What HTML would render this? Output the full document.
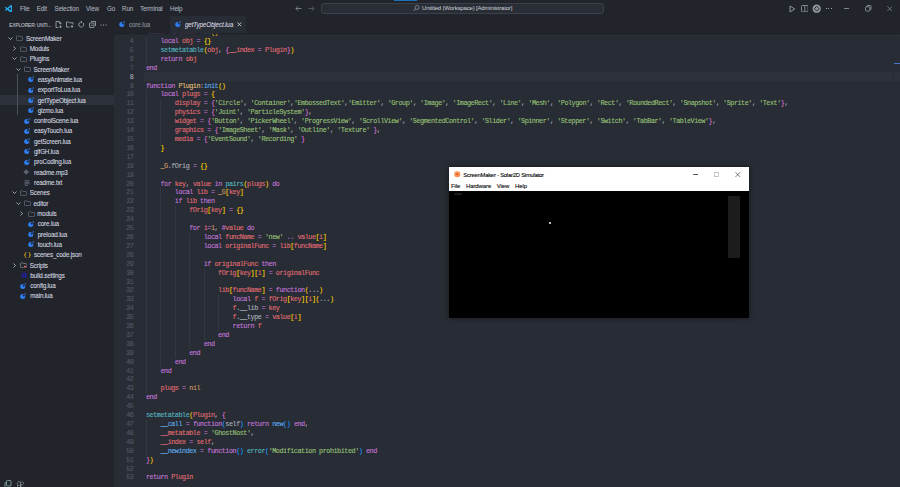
<!DOCTYPE html>
<html><head><meta charset="utf-8"><style>
*{margin:0;padding:0;box-sizing:border-box}
html,body{width:900px;height:487px;overflow:hidden;background:#282c34;font-family:"Liberation Sans",sans-serif}
.abs{position:absolute}
#title{position:absolute;left:0;top:0;width:900px;height:16.4px;background:#21252b}
.menu{position:absolute;top:4.6px;font-size:6.3px;letter-spacing:-0.15px;color:#d7dae0;line-height:7px;white-space:nowrap;-webkit-text-stroke:0.08px currentColor}
#side{position:absolute;left:0;top:16.4px;width:113.6px;height:471px;background:#21252b}
.tr{position:absolute;font-size:6.3px;letter-spacing:-0.17px;line-height:10.3125px;color:#d7dae0;white-space:nowrap;-webkit-text-stroke:0.08px currentColor}
.ico{position:absolute;line-height:0}
.sel{position:absolute;left:0;width:113.6px;height:10.3125px;background:#2c313a}
#tabs{position:absolute;left:113.6px;top:16.4px;width:786.4px;height:16.4px;background:#21252b}
#editor{position:absolute;left:113.6px;top:32.8px;width:786.4px;height:454.2px;background:#282c34;overflow:hidden}
.ln{position:absolute;left:146.0px;height:8.90625px;line-height:8.90625px;font-family:"Liberation Mono",monospace;font-size:6.8px;letter-spacing:-0.4736px;-webkit-text-stroke:0.1px currentColor;white-space:pre;color:#abb2bf}
.num{position:absolute;left:0;width:133.4px;text-align:right;height:8.90625px;line-height:8.90625px;font-family:"Liberation Mono",monospace;font-size:6.8px;letter-spacing:-0.4736px;color:#515867;-webkit-text-stroke:0.1px currentColor}
.num.cur{color:#abb2bf}
.ig{position:absolute;width:0.47px;height:8.90625px;background:#323740}
#code{position:absolute;left:-113.6px;top:-32.8px;width:900px;height:487px}
</style></head><body>
<svg width="0" height="0" style="position:absolute"><defs><mask id="lm" maskUnits="userSpaceOnUse" x="0" y="0" width="12" height="12"><rect x="0" y="0" width="12" height="12" fill="#fff"/><circle cx="7.3" cy="4.7" r="1.9" fill="#000"/></mask></defs></svg>
<div id="title">
  <svg class="abs" style="left:4.5px;top:4.7px" width="7.9" height="7.6" viewBox="0 0 100 100" preserveAspectRatio="none"><path fill-rule="evenodd" fill="#23a9f2" d="M96.46 10.8L75.86.87a6.23 6.23 0 0 0-7.1 1.2L29.35 38.04 12.18 25.01a4.16 4.16 0 0 0-5.32.24L1.36 30.25a4.16 4.16 0 0 0 0 6.16L16.25 50 1.36 63.59a4.16 4.16 0 0 0 0 6.16l5.5 5a4.160 4.16 0 0 0 5.32.24l17.17-13.03 39.41 35.97a6.23 6.23 0 0 0 7.1 1.2l20.6-9.930A6.25 6.25 0 0 0 100 83.6V16.4a6.25 6.25 0 0 0-3.54-5.6zM75.02 72.7L45.11 50l29.91-22.7z"/></svg>
  <div class="menu" style="left:20px;top:4.8px;color:#b4bac4;-webkit-text-stroke:0.03px currentColor">File</div>
  <div class="menu" style="left:36.7px;top:4.8px;color:#b4bac4;-webkit-text-stroke:0.03px currentColor">Edit</div>
  <div class="menu" style="left:54.4px;top:4.8px;color:#b4bac4;-webkit-text-stroke:0.03px currentColor">Selection</div>
  <div class="menu" style="left:86px;top:4.8px;color:#b4bac4;-webkit-text-stroke:0.03px currentColor">View</div>
  <div class="menu" style="left:107px;top:4.8px;color:#b4bac4;-webkit-text-stroke:0.03px currentColor">Go</div>
  <div class="menu" style="left:122px;top:4.8px;color:#b4bac4;-webkit-text-stroke:0.03px currentColor">Run</div>
  <div class="menu" style="left:140px;top:4.8px;color:#b4bac4;-webkit-text-stroke:0.03px currentColor">Terminal</div>
  <div class="menu" style="left:170px;top:4.8px;color:#b4bac4;-webkit-text-stroke:0.03px currentColor">Help</div>
  <div class="abs" style="left:393.9px;top:0;width:22.8px;height:1.1px;background:#1f6fb5"></div>
  <svg class="abs" style="left:295.4px;top:4.9px" width="7" height="7" viewBox="0 0 14 14"><path d="M13 7H1.8M6.6 2.2L1.8 7l4.8 4.8" fill="none" stroke="#a3aab6" stroke-width="1.25"/></svg>
  <svg class="abs" style="left:307.8px;top:4.9px" width="7" height="7" viewBox="0 0 14 14"><path d="M1 7h11.2M7.4 2.2L12.2 7l-4.8 4.8" fill="none" stroke="#6b717d" stroke-width="1.25"/></svg>
  <div class="abs" style="left:321px;top:3.0px;width:282.8px;height:11.1px;border:0.7px solid #3b404b;border-radius:2.8px;background:#292d35"></div>
  <svg class="abs" style="left:413.4px;top:5px" width="6.5" height="6.5" viewBox="0 0 13 13"><circle cx="8" cy="5" r="4" fill="none" stroke="#abb2bf" stroke-width="1.2"/><path d="M5.2 7.8L1 12" stroke="#abb2bf" stroke-width="1.3"/></svg>
  <div class="menu" style="left:422px;top:5.4px;color:#c8ccd4;font-size:6px;letter-spacing:-0.17px;-webkit-text-stroke:0.03px currentColor">Untitled (Workspace) [Administrator]</div>
  <svg class="abs" style="left:788.5px;top:4.6px" width="7" height="8" viewBox="0 0 14 16"><path d="M2 2.2v11.6L11.6 8z" fill="none" stroke="#9da5b4" stroke-width="1.7" stroke-linejoin="round"/></svg>
  <svg class="abs" style="left:800.8px;top:4.6px" width="7.6" height="7.4" viewBox="0 0 15 14.6"><rect x="0.9" y="0.9" width="13.2" height="12.8" rx="2" fill="none" stroke="#9da5b4" stroke-width="1.6"/><path d="M7.5 1v12.6" stroke="#9da5b4" stroke-width="1.5"/></svg>
  <svg class="abs" style="left:811.8px;top:3.7px" width="9.4" height="9.4" viewBox="0 0 18 18"><circle cx="9" cy="9" r="8" fill="#8f96a2"/><path d="M9 4.4L13.6 9 9 13.6 4.4 9z" fill="none" stroke="#21252b" stroke-width="1.9"/></svg>
  <div class="abs" style="left:826px;top:8px;width:1px;height:1px;background:#a0a7b3"></div><div class="abs" style="left:828.3px;top:8px;width:1px;height:1px;background:#a0a7b3"></div><div class="abs" style="left:830.6px;top:8px;width:1px;height:1px;background:#a0a7b3"></div>
  <div class="abs" style="left:843.8px;top:7.7px;width:5.4px;height:0.6px;background:#7f8692"></div>
  <svg class="abs" style="left:865px;top:5.2px" width="6.6" height="6.6" viewBox="0 0 13 13"><rect x="1" y="3.5" width="8.5" height="8.5" rx="2" fill="none" stroke="#9da5b4" stroke-width="1.5"/><path d="M3.5 3.3V3a2 2 0 0 1 2-2h4.5a2 2 0 0 1 2 2v4.5a2 2 0 0 1-2 2h-.3" fill="none" stroke="#9da5b4" stroke-width="1.5"/></svg>
  <svg class="abs" style="left:887px;top:5.5px" width="5.4" height="5.4" viewBox="0 0 10 10"><path d="M0.5 0.5l9 9M9.5 0.5l-9 9" stroke="#9da5b4" stroke-width="1.1"/></svg>
</div>
<div id="side">
  <div class="abs" style="left:9.3px;top:6.1px;font-size:4.85px;letter-spacing:-0.15px;color:#c8ccd4;line-height:7px;white-space:nowrap;-webkit-text-stroke:0.06px currentColor">EXPLORER: UNTI...</div>
  <svg class="abs" style="left:55.3px;top:5.1px" width="7" height="7" viewBox="0 0 14 14"><path d="M8.5 1H2v12h5M8.5 1L12 4.5V7M8.5 1v3.5H12" fill="none" stroke="#c0c5ce" stroke-width="1.35"/><path d="M11 9v5M8.5 11.5h5" stroke="#c0c5ce" stroke-width="1.35"/></svg>
  <svg class="abs" style="left:66px;top:5.1px" width="8" height="7" viewBox="0 0 16 14"><path d="M7 12H1V2h4.5l1.5 1.5h7V7" fill="none" stroke="#c0c5ce" stroke-width="1.35"/><path d="M12 8.5v5M9.5 11h5" stroke="#c0c5ce" stroke-width="1.35"/></svg>
  <svg class="abs" style="left:78px;top:5.1px" width="6.5" height="7" viewBox="0 0 13 14"><path d="M10.5 4.2A5 5 0 1 1 6.5 2.2" fill="none" stroke="#c0c5ce" stroke-width="1.4"/><path d="M6 0.3l2.2 2-2.2 2" fill="none" stroke="#c0c5ce" stroke-width="1.35"/></svg>
  <svg class="abs" style="left:89px;top:5.1px" width="7" height="7" viewBox="0 0 14 14"><rect x="1" y="4" width="9" height="9" rx="1" fill="none" stroke="#c0c5ce" stroke-width="1.35"/><path d="M4 1h9v9" fill="none" stroke="#c0c5ce" stroke-width="1.35"/><path d="M3.5 8.5h4" stroke="#c0c5ce" stroke-width="1.35"/></svg>
  <svg class="abs" style="left:100px;top:8px" width="7" height="2" viewBox="0 0 14 4"><circle cx="2" cy="2" r="1.1" fill="#c0c5ce"/><circle cx="7" cy="2" r="1.1" fill="#c0c5ce"/><circle cx="12" cy="2" r="1.1" fill="#c0c5ce"/></svg>
</div>
<div id="tree" class="abs" style="left:0;top:0">
<div class="ico" style="left:8.00px;top:35.74px"><svg width="5" height="5" viewBox="0 0 10 10"><path d="M1 3l4 4 4-4" fill="none" stroke="#c5cad3" stroke-width="1.5"/></svg></div>
<div class="ico" style="left:16.30px;top:35.34px"><svg width="7" height="6" viewBox="0 0 14 12"><path d="M2.5 1.5h2.8l1.4 1.5h4.8a1.6 1.6 0 0 1 1.6 1.6v5a1.6 1.6 0 0 1-1.6 1.6H2.5A1.6 1.6 0 0 1 0.9 9.6V3.1A1.6 1.6 0 0 1 2.5 1.5z" fill="none" stroke="#6a7282" stroke-width="1.5"/></svg></div>
<div class="tr" style="left:26.00px;top:33.64px">ScreenMaker</div>
<div class="ico" style="left:11.75px;top:46.06px"><svg width="5" height="5" viewBox="0 0 10 10"><path d="M3 1l4 4-4 4" fill="none" stroke="#c5cad3" stroke-width="1.5"/></svg></div>
<div class="ico" style="left:20.05px;top:45.66px"><svg width="7" height="6" viewBox="0 0 14 12"><path d="M2.5 1.5h2.8l1.4 1.5h4.8a1.6 1.6 0 0 1 1.6 1.6v5a1.6 1.6 0 0 1-1.6 1.6H2.5A1.6 1.6 0 0 1 0.9 9.6V3.1A1.6 1.6 0 0 1 2.5 1.5z" fill="none" stroke="#6a7282" stroke-width="1.5"/></svg></div>
<div class="tr" style="left:29.75px;top:43.96px">Moduls</div>
<div class="ico" style="left:11.75px;top:56.37px"><svg width="5" height="5" viewBox="0 0 10 10"><path d="M1 3l4 4 4-4" fill="none" stroke="#c5cad3" stroke-width="1.5"/></svg></div>
<div class="ico" style="left:20.05px;top:55.97px"><svg width="7" height="6" viewBox="0 0 14 12"><path d="M2.5 1.5h2.8l1.4 1.5h4.8a1.6 1.6 0 0 1 1.6 1.6v5a1.6 1.6 0 0 1-1.6 1.6H2.5A1.6 1.6 0 0 1 0.9 9.6V3.1A1.6 1.6 0 0 1 2.5 1.5z" fill="none" stroke="#6a7282" stroke-width="1.5"/></svg></div>
<div class="tr" style="left:29.75px;top:54.27px">Plugins</div>
<div class="ico" style="left:15.50px;top:66.68px"><svg width="5" height="5" viewBox="0 0 10 10"><path d="M1 3l4 4 4-4" fill="none" stroke="#c5cad3" stroke-width="1.5"/></svg></div>
<div class="ico" style="left:23.80px;top:66.28px"><svg width="7" height="6" viewBox="0 0 14 12"><path d="M2.5 1.5h2.8l1.4 1.5h4.8a1.6 1.6 0 0 1 1.6 1.6v5a1.6 1.6 0 0 1-1.6 1.6H2.5A1.6 1.6 0 0 1 0.9 9.6V3.1A1.6 1.6 0 0 1 2.5 1.5z" fill="none" stroke="#6a7282" stroke-width="1.5"/></svg></div>
<div class="tr" style="left:33.50px;top:64.58px">ScreenMaker</div>
<div class="ico" style="left:28.25px;top:76.59px"><svg width="6.2" height="6.2" viewBox="0 0 12 12" style="margin-left:-0.5px;margin-top:-0.3px"><circle cx="5.3" cy="6.7" r="4.9" fill="#2f7ef4" mask="url(#lm)"/><circle cx="10.3" cy="1.7" r="1.35" fill="#2f7ef4"/></svg></div>
<div class="tr" style="left:37.75px;top:74.89px">easyAnimate.lua</div>
<div class="ico" style="left:28.25px;top:86.91px"><svg width="6.2" height="6.2" viewBox="0 0 12 12" style="margin-left:-0.5px;margin-top:-0.3px"><circle cx="5.3" cy="6.7" r="4.9" fill="#2f7ef4" mask="url(#lm)"/><circle cx="10.3" cy="1.7" r="1.35" fill="#2f7ef4"/></svg></div>
<div class="tr" style="left:37.75px;top:85.21px">exportToLua.lua</div>
<div class="sel" style="top:95.02px"></div>
<div class="ico" style="left:28.25px;top:97.22px"><svg width="6.2" height="6.2" viewBox="0 0 12 12" style="margin-left:-0.5px;margin-top:-0.3px"><circle cx="5.3" cy="6.7" r="4.9" fill="#2f7ef4" mask="url(#lm)"/><circle cx="10.3" cy="1.7" r="1.35" fill="#2f7ef4"/></svg></div>
<div class="tr" style="left:37.75px;top:95.52px">getTypeObject.lua</div>
<div class="ico" style="left:28.25px;top:107.53px"><svg width="6.2" height="6.2" viewBox="0 0 12 12" style="margin-left:-0.5px;margin-top:-0.3px"><circle cx="5.3" cy="6.7" r="4.9" fill="#2f7ef4" mask="url(#lm)"/><circle cx="10.3" cy="1.7" r="1.35" fill="#2f7ef4"/></svg></div>
<div class="tr" style="left:37.75px;top:105.83px">gizmo.lua</div>
<div class="ico" style="left:24.50px;top:117.84px"><svg width="6.2" height="6.2" viewBox="0 0 12 12" style="margin-left:-0.5px;margin-top:-0.3px"><circle cx="5.3" cy="6.7" r="4.9" fill="#2f7ef4" mask="url(#lm)"/><circle cx="10.3" cy="1.7" r="1.35" fill="#2f7ef4"/></svg></div>
<div class="tr" style="left:34.00px;top:116.14px">controlScene.lua</div>
<div class="ico" style="left:24.50px;top:128.16px"><svg width="6.2" height="6.2" viewBox="0 0 12 12" style="margin-left:-0.5px;margin-top:-0.3px"><circle cx="5.3" cy="6.7" r="4.9" fill="#2f7ef4" mask="url(#lm)"/><circle cx="10.3" cy="1.7" r="1.35" fill="#2f7ef4"/></svg></div>
<div class="tr" style="left:34.00px;top:126.46px">easyTouch.lua</div>
<div class="ico" style="left:24.50px;top:138.47px"><svg width="6.2" height="6.2" viewBox="0 0 12 12" style="margin-left:-0.5px;margin-top:-0.3px"><circle cx="5.3" cy="6.7" r="4.9" fill="#2f7ef4" mask="url(#lm)"/><circle cx="10.3" cy="1.7" r="1.35" fill="#2f7ef4"/></svg></div>
<div class="tr" style="left:34.00px;top:136.77px">getScreen.lua</div>
<div class="ico" style="left:24.50px;top:148.78px"><svg width="6.2" height="6.2" viewBox="0 0 12 12" style="margin-left:-0.5px;margin-top:-0.3px"><circle cx="5.3" cy="6.7" r="4.9" fill="#2f7ef4" mask="url(#lm)"/><circle cx="10.3" cy="1.7" r="1.35" fill="#2f7ef4"/></svg></div>
<div class="tr" style="left:34.00px;top:147.08px">gifGH.lua</div>
<div class="ico" style="left:24.50px;top:159.09px"><svg width="6.2" height="6.2" viewBox="0 0 12 12" style="margin-left:-0.5px;margin-top:-0.3px"><circle cx="5.3" cy="6.7" r="4.9" fill="#2f7ef4" mask="url(#lm)"/><circle cx="10.3" cy="1.7" r="1.35" fill="#2f7ef4"/></svg></div>
<div class="tr" style="left:34.00px;top:157.39px">proCoding.lua</div>
<div class="ico" style="left:24.50px;top:169.41px"><svg width="6.4" height="6" viewBox="0 0 12 12" style="margin-left:-1.2px;margin-top:-0.5px"><path d="M6 0.5l5.5 5.5-5.5 5.5-5.5-5.5z" fill="#5c6370"/></svg></div>
<div class="tr" style="left:34.00px;top:167.71px">readme.mp3</div>
<div class="ico" style="left:24.50px;top:179.72px"><svg width="6" height="6" viewBox="0 0 12 12" style="margin-left:-0.5px"><path d="M1 1.5h10M1 4.5h10M1 7.5h10M1 10.5h7" stroke="#5c6370" stroke-width="2"/></svg></div>
<div class="tr" style="left:34.00px;top:178.02px">readme.txt</div>
<div class="ico" style="left:11.75px;top:190.43px"><svg width="5" height="5" viewBox="0 0 10 10"><path d="M1 3l4 4 4-4" fill="none" stroke="#c5cad3" stroke-width="1.5"/></svg></div>
<div class="ico" style="left:20.05px;top:190.03px"><svg width="7" height="6" viewBox="0 0 14 12"><path d="M2.5 1.5h2.8l1.4 1.5h4.8a1.6 1.6 0 0 1 1.6 1.6v5a1.6 1.6 0 0 1-1.6 1.6H2.5A1.6 1.6 0 0 1 0.9 9.6V3.1A1.6 1.6 0 0 1 2.5 1.5z" fill="none" stroke="#6a7282" stroke-width="1.5"/></svg></div>
<div class="tr" style="left:29.75px;top:188.33px">Scenes</div>
<div class="ico" style="left:15.50px;top:200.74px"><svg width="5" height="5" viewBox="0 0 10 10"><path d="M1 3l4 4 4-4" fill="none" stroke="#c5cad3" stroke-width="1.5"/></svg></div>
<div class="ico" style="left:23.80px;top:200.34px"><svg width="7" height="6" viewBox="0 0 14 12"><path d="M2.5 1.5h2.8l1.4 1.5h4.8a1.6 1.6 0 0 1 1.6 1.6v5a1.6 1.6 0 0 1-1.6 1.6H2.5A1.6 1.6 0 0 1 0.9 9.6V3.1A1.6 1.6 0 0 1 2.5 1.5z" fill="none" stroke="#6a7282" stroke-width="1.5"/></svg></div>
<div class="tr" style="left:33.50px;top:198.64px">editor</div>
<div class="ico" style="left:19.25px;top:211.06px"><svg width="5" height="5" viewBox="0 0 10 10"><path d="M3 1l4 4-4 4" fill="none" stroke="#c5cad3" stroke-width="1.5"/></svg></div>
<div class="ico" style="left:27.55px;top:210.66px"><svg width="7" height="6" viewBox="0 0 14 12"><path d="M2.5 1.5h2.8l1.4 1.5h4.8a1.6 1.6 0 0 1 1.6 1.6v5a1.6 1.6 0 0 1-1.6 1.6H2.5A1.6 1.6 0 0 1 0.9 9.6V3.1A1.6 1.6 0 0 1 2.5 1.5z" fill="none" stroke="#6a7282" stroke-width="1.5"/></svg></div>
<div class="tr" style="left:37.25px;top:208.96px">moduls</div>
<div class="ico" style="left:28.25px;top:220.97px"><svg width="6.2" height="6.2" viewBox="0 0 12 12" style="margin-left:-0.5px;margin-top:-0.3px"><circle cx="5.3" cy="6.7" r="4.9" fill="#2f7ef4" mask="url(#lm)"/><circle cx="10.3" cy="1.7" r="1.35" fill="#2f7ef4"/></svg></div>
<div class="tr" style="left:37.75px;top:219.27px">core.lua</div>
<div class="ico" style="left:28.25px;top:231.28px"><svg width="6.2" height="6.2" viewBox="0 0 12 12" style="margin-left:-0.5px;margin-top:-0.3px"><circle cx="5.3" cy="6.7" r="4.9" fill="#2f7ef4" mask="url(#lm)"/><circle cx="10.3" cy="1.7" r="1.35" fill="#2f7ef4"/></svg></div>
<div class="tr" style="left:37.75px;top:229.58px">preload.lua</div>
<div class="ico" style="left:28.25px;top:241.59px"><svg width="6.2" height="6.2" viewBox="0 0 12 12" style="margin-left:-0.5px;margin-top:-0.3px"><circle cx="5.3" cy="6.7" r="4.9" fill="#2f7ef4" mask="url(#lm)"/><circle cx="10.3" cy="1.7" r="1.35" fill="#2f7ef4"/></svg></div>
<div class="tr" style="left:37.75px;top:239.89px">touch.lua</div>
<div class="ico" style="left:24.50px;top:251.91px"><svg width="7" height="6" viewBox="0 0 14 12" style="margin-left:-1px"><path d="M4.5 0.8C2.5 0.8 2.6 2.5 2.6 4.2 2.6 5.3 1.8 6 0.8 6c1 0 1.8.7 1.8 1.8 0 1.7-.1 3.4 1.9 3.4M9.5 0.8c2 0 1.9 1.7 1.9 3.4 0 1.1.8 1.8 1.8 1.8-1 0-1.8.7-1.8 1.8 0 1.7.1 3.4-1.9 3.4" fill="none" stroke="#e8a71c" stroke-width="1.9"/></svg></div>
<div class="tr" style="left:34.00px;top:250.21px">scenes_code.json</div>
<div class="ico" style="left:11.75px;top:262.62px"><svg width="5" height="5" viewBox="0 0 10 10"><path d="M3 1l4 4-4 4" fill="none" stroke="#c5cad3" stroke-width="1.5"/></svg></div>
<div class="ico" style="left:20.05px;top:262.22px"><svg width="7" height="6" viewBox="0 0 14 12"><path d="M7 11.2H2.5A1.6 1.6 0 0 1 0.9 9.6V3.1A1.6 1.6 0 0 1 2.5 1.5h2.8l1.4 1.5h4.8a1.6 1.6 0 0 1 1.6 1.6V6.5" fill="none" stroke="#8a909b" stroke-width="1.5"/><rect x="8" y="7.6" width="5.2" height="3.2" rx="0.8" fill="#e0707a"/></svg></div>
<div class="tr" style="left:29.75px;top:260.52px">Scripts</div>
<div class="ico" style="left:20.75px;top:272.53px"><svg width="6.5" height="6.5" viewBox="0 0 12 12" style="margin-top:-0.3px"><path d="M6 0.3l1.3 1.6 2-0.5 0.5 2 1.9.9-.9 1.7.9 1.7-1.9.9-.5 2-2-.5L6 11.7 4.7 10.1l-2 .5-.5-2-1.9-.9.9-1.7-.9-1.7 1.9-.9.5-2 2 .5z" fill="#1f1f9e"/><circle cx="6" cy="6" r="1.8" fill="#21252b"/></svg></div>
<div class="tr" style="left:30.25px;top:270.83px">build.settings</div>
<div class="ico" style="left:20.75px;top:282.84px"><svg width="6.2" height="6.2" viewBox="0 0 12 12" style="margin-left:-0.5px;margin-top:-0.3px"><circle cx="5.3" cy="6.7" r="4.9" fill="#2f7ef4" mask="url(#lm)"/><circle cx="10.3" cy="1.7" r="1.35" fill="#2f7ef4"/></svg></div>
<div class="tr" style="left:30.25px;top:281.14px">config.lua</div>
<div class="ico" style="left:20.75px;top:293.16px"><svg width="6.2" height="6.2" viewBox="0 0 12 12" style="margin-left:-0.5px;margin-top:-0.3px"><circle cx="5.3" cy="6.7" r="4.9" fill="#2f7ef4" mask="url(#lm)"/><circle cx="10.3" cy="1.7" r="1.35" fill="#2f7ef4"/></svg></div>
<div class="tr" style="left:30.25px;top:291.46px">main.lua</div>
<div class="abs" style="left:17.1px;top:74px;width:0.6px;height:41.3px;background:#4b515c"></div>
</div>
<div id="tabs">
  <div class="abs" style="left:56.8px;top:0;width:75.4px;height:16.4px;background:#282c34"></div>
  <div class="ico" style="left:5.6px;top:5.3px"><svg width="6.2" height="6.2" viewBox="0 0 12 12" style="margin-left:-0.5px;margin-top:-0.3px"><circle cx="5.3" cy="6.7" r="4.9" fill="#2f7ef4" mask="url(#lm)"/><circle cx="10.3" cy="1.7" r="1.35" fill="#2f7ef4"/></svg></div>
  <div class="menu" style="left:15.4px;top:4.9px;color:#8b919c">core.lua</div>
  <div class="ico" style="left:62px;top:5.3px"><svg width="6.2" height="6.2" viewBox="0 0 12 12" style="margin-left:-0.5px;margin-top:-0.3px"><circle cx="5.3" cy="6.7" r="4.9" fill="#2f7ef4" mask="url(#lm)"/><circle cx="10.3" cy="1.7" r="1.35" fill="#2f7ef4"/></svg></div>
  <div class="menu" style="left:71.4px;top:4.9px;color:#d7dae0;font-style:italic">getTypeObject.lua</div>
  <svg class="abs" style="left:123.6px;top:5.9px" width="4.8" height="4.8" viewBox="0 0 10 10"><path d="M1 1l8 8M9 1l-8 8" stroke="#d7dae0" stroke-width="1.7"/></svg>
</div>
<div id="editor">
 <div id="code">
  <div class="abs" style="left:144px;top:71.8px;width:756px;height:8.9px;background:#2c313c"></div>
<div class="ig" style="left:146.00px;top:37.05px"></div>
<div class="ig" style="left:146.00px;top:45.95px"></div>
<div class="ig" style="left:146.00px;top:54.86px"></div>
<div class="ig" style="left:146.00px;top:90.48px"></div>
<div class="ig" style="left:146.00px;top:99.39px"></div>
<div class="ig" style="left:160.43px;top:99.39px"></div>
<div class="ig" style="left:146.00px;top:108.30px"></div>
<div class="ig" style="left:160.43px;top:108.30px"></div>
<div class="ig" style="left:146.00px;top:117.20px"></div>
<div class="ig" style="left:160.43px;top:117.20px"></div>
<div class="ig" style="left:146.00px;top:126.11px"></div>
<div class="ig" style="left:160.43px;top:126.11px"></div>
<div class="ig" style="left:146.00px;top:135.02px"></div>
<div class="ig" style="left:160.43px;top:135.02px"></div>
<div class="ig" style="left:146.00px;top:143.92px"></div>
<div class="ig" style="left:146.00px;top:152.83px"></div>
<div class="ig" style="left:146.00px;top:161.73px"></div>
<div class="ig" style="left:146.00px;top:170.64px"></div>
<div class="ig" style="left:146.00px;top:179.55px"></div>
<div class="ig" style="left:146.00px;top:188.45px"></div>
<div class="ig" style="left:160.43px;top:188.45px"></div>
<div class="ig" style="left:146.00px;top:197.36px"></div>
<div class="ig" style="left:160.43px;top:197.36px"></div>
<div class="ig" style="left:146.00px;top:206.27px"></div>
<div class="ig" style="left:160.43px;top:206.27px"></div>
<div class="ig" style="left:174.86px;top:206.27px"></div>
<div class="ig" style="left:146.00px;top:215.17px"></div>
<div class="ig" style="left:160.43px;top:215.17px"></div>
<div class="ig" style="left:174.86px;top:215.17px"></div>
<div class="ig" style="left:146.00px;top:224.08px"></div>
<div class="ig" style="left:160.43px;top:224.08px"></div>
<div class="ig" style="left:174.86px;top:224.08px"></div>
<div class="ig" style="left:146.00px;top:232.98px"></div>
<div class="ig" style="left:160.43px;top:232.98px"></div>
<div class="ig" style="left:174.86px;top:232.98px"></div>
<div class="ig" style="left:189.28px;top:232.98px"></div>
<div class="ig" style="left:146.00px;top:241.89px"></div>
<div class="ig" style="left:160.43px;top:241.89px"></div>
<div class="ig" style="left:174.86px;top:241.89px"></div>
<div class="ig" style="left:189.28px;top:241.89px"></div>
<div class="ig" style="left:146.00px;top:250.80px"></div>
<div class="ig" style="left:160.43px;top:250.80px"></div>
<div class="ig" style="left:174.86px;top:250.80px"></div>
<div class="ig" style="left:189.28px;top:250.80px"></div>
<div class="ig" style="left:146.00px;top:259.70px"></div>
<div class="ig" style="left:160.43px;top:259.70px"></div>
<div class="ig" style="left:174.86px;top:259.70px"></div>
<div class="ig" style="left:189.28px;top:259.70px"></div>
<div class="ig" style="left:146.00px;top:268.61px"></div>
<div class="ig" style="left:160.43px;top:268.61px"></div>
<div class="ig" style="left:174.86px;top:268.61px"></div>
<div class="ig" style="left:189.28px;top:268.61px"></div>
<div class="ig" style="left:203.71px;top:268.61px"></div>
<div class="ig" style="left:146.00px;top:277.52px"></div>
<div class="ig" style="left:160.43px;top:277.52px"></div>
<div class="ig" style="left:174.86px;top:277.52px"></div>
<div class="ig" style="left:189.28px;top:277.52px"></div>
<div class="ig" style="left:203.71px;top:277.52px"></div>
<div class="ig" style="left:146.00px;top:286.42px"></div>
<div class="ig" style="left:160.43px;top:286.42px"></div>
<div class="ig" style="left:174.86px;top:286.42px"></div>
<div class="ig" style="left:189.28px;top:286.42px"></div>
<div class="ig" style="left:203.71px;top:286.42px"></div>
<div class="ig" style="left:146.00px;top:295.33px"></div>
<div class="ig" style="left:160.43px;top:295.33px"></div>
<div class="ig" style="left:174.86px;top:295.33px"></div>
<div class="ig" style="left:189.28px;top:295.33px"></div>
<div class="ig" style="left:203.71px;top:295.33px"></div>
<div class="ig" style="left:218.14px;top:295.33px"></div>
<div class="ig" style="left:146.00px;top:304.23px"></div>
<div class="ig" style="left:160.43px;top:304.23px"></div>
<div class="ig" style="left:174.86px;top:304.23px"></div>
<div class="ig" style="left:189.28px;top:304.23px"></div>
<div class="ig" style="left:203.71px;top:304.23px"></div>
<div class="ig" style="left:218.14px;top:304.23px"></div>
<div class="ig" style="left:146.00px;top:313.14px"></div>
<div class="ig" style="left:160.43px;top:313.14px"></div>
<div class="ig" style="left:174.86px;top:313.14px"></div>
<div class="ig" style="left:189.28px;top:313.14px"></div>
<div class="ig" style="left:203.71px;top:313.14px"></div>
<div class="ig" style="left:218.14px;top:313.14px"></div>
<div class="ig" style="left:146.00px;top:322.05px"></div>
<div class="ig" style="left:160.43px;top:322.05px"></div>
<div class="ig" style="left:174.86px;top:322.05px"></div>
<div class="ig" style="left:189.28px;top:322.05px"></div>
<div class="ig" style="left:203.71px;top:322.05px"></div>
<div class="ig" style="left:218.14px;top:322.05px"></div>
<div class="ig" style="left:146.00px;top:330.95px"></div>
<div class="ig" style="left:160.43px;top:330.95px"></div>
<div class="ig" style="left:174.86px;top:330.95px"></div>
<div class="ig" style="left:189.28px;top:330.95px"></div>
<div class="ig" style="left:203.71px;top:330.95px"></div>
<div class="ig" style="left:146.00px;top:339.86px"></div>
<div class="ig" style="left:160.43px;top:339.86px"></div>
<div class="ig" style="left:174.86px;top:339.86px"></div>
<div class="ig" style="left:189.28px;top:339.86px"></div>
<div class="ig" style="left:146.00px;top:348.77px"></div>
<div class="ig" style="left:160.43px;top:348.77px"></div>
<div class="ig" style="left:174.86px;top:348.77px"></div>
<div class="ig" style="left:146.00px;top:357.67px"></div>
<div class="ig" style="left:160.43px;top:357.67px"></div>
<div class="ig" style="left:146.00px;top:366.58px"></div>
<div class="ig" style="left:146.00px;top:375.48px"></div>
<div class="ig" style="left:146.00px;top:384.39px"></div>
<div class="ig" style="left:146.00px;top:420.02px"></div>
<div class="ig" style="left:146.00px;top:428.92px"></div>
<div class="ig" style="left:146.00px;top:437.83px"></div>
<div class="ig" style="left:146.00px;top:446.73px"></div>
<div class="ln" style="top:28.14px"><span style="color:#c678dd">local</span> <span style="color:#c678dd">function</span> <span style="color:#61afef">new</span><span style="color:#ffd700">()</span></div>
<div class="num" style="top:28.14px">3</div>
<div class="ln" style="top:37.05px">    <span style="color:#c678dd">local</span> <span style="color:#e06c75">obj</span> <span style="color:#c678dd">=</span> <span style="color:#ffd700">{}</span></div>
<div class="num" style="top:37.05px">4</div>
<div class="ln" style="top:45.95px">    <span style="color:#56b6c2">setmetatable</span><span style="color:#ffd700">(</span><span style="color:#e06c75">obj</span><span style="color:#abb2bf">, </span><span style="color:#da70d6">{</span><span style="color:#e06c75">__index</span> <span style="color:#c678dd">=</span> <span style="color:#e06c75">Plugin</span><span style="color:#da70d6">}</span><span style="color:#ffd700">)</span></div>
<div class="num" style="top:45.95px">5</div>
<div class="ln" style="top:54.86px">    <span style="color:#c678dd">return</span> <span style="color:#e06c75">obj</span></div>
<div class="num" style="top:54.86px">6</div>
<div class="ln" style="top:63.77px"><span style="color:#c678dd">end</span></div>
<div class="num" style="top:63.77px">7</div>
<div class="ln" style="top:72.67px"></div>
<div class="num cur" style="top:72.67px">8</div>
<div class="ln" style="top:81.58px"><span style="color:#c678dd">function</span> <span style="color:#e5c07b">Plugin</span><span style="color:#abb2bf">:</span><span style="color:#61afef">init</span><span style="color:#ffd700">()</span></div>
<div class="num" style="top:81.58px">9</div>
<div class="ln" style="top:90.48px">    <span style="color:#c678dd">local</span> <span style="color:#e06c75">plugs</span> <span style="color:#c678dd">=</span> <span style="color:#ffd700">{</span></div>
<div class="num" style="top:90.48px">10</div>
<div class="ln" style="top:99.39px">        <span style="color:#e06c75">display</span> <span style="color:#c678dd">=</span> <span style="color:#da70d6">{</span><span style="color:#98c379">&#x27;Circle&#x27;</span><span style="color:#abb2bf">, </span><span style="color:#98c379">&#x27;Container&#x27;</span><span style="color:#abb2bf">,</span><span style="color:#98c379">&#x27;EmbossedText&#x27;</span><span style="color:#abb2bf">,</span><span style="color:#98c379">&#x27;Emitter&#x27;</span><span style="color:#abb2bf">, </span><span style="color:#98c379">&#x27;Group&#x27;</span><span style="color:#abb2bf">, </span><span style="color:#98c379">&#x27;Image&#x27;</span><span style="color:#abb2bf">, </span><span style="color:#98c379">&#x27;ImageRect&#x27;</span><span style="color:#abb2bf">, </span><span style="color:#98c379">&#x27;Line&#x27;</span><span style="color:#abb2bf">, </span><span style="color:#98c379">&#x27;Mesh&#x27;</span><span style="color:#abb2bf">, </span><span style="color:#98c379">&#x27;Polygon&#x27;</span><span style="color:#abb2bf">, </span><span style="color:#98c379">&#x27;Rect&#x27;</span><span style="color:#abb2bf">, </span><span style="color:#98c379">&#x27;RoundedRect&#x27;</span><span style="color:#abb2bf">, </span><span style="color:#98c379">&#x27;Snapshot&#x27;</span><span style="color:#abb2bf">, </span><span style="color:#98c379">&#x27;Sprite&#x27;</span><span style="color:#abb2bf">, </span><span style="color:#98c379">&#x27;Text&#x27;</span><span style="color:#da70d6">}</span><span style="color:#abb2bf">,</span></div>
<div class="num" style="top:99.39px">11</div>
<div class="ln" style="top:108.30px">        <span style="color:#e06c75">physics</span> <span style="color:#c678dd">=</span> <span style="color:#da70d6">{</span><span style="color:#98c379">&#x27;Joint&#x27;</span><span style="color:#abb2bf">, </span><span style="color:#98c379">&#x27;ParticleSystem&#x27;</span><span style="color:#da70d6">}</span><span style="color:#abb2bf">,</span></div>
<div class="num" style="top:108.30px">12</div>
<div class="ln" style="top:117.20px">        <span style="color:#e06c75">widget</span> <span style="color:#c678dd">=</span> <span style="color:#da70d6">{</span><span style="color:#98c379">&#x27;Button&#x27;</span><span style="color:#abb2bf">, </span><span style="color:#98c379">&#x27;PickerWheel&#x27;</span><span style="color:#abb2bf">, </span><span style="color:#98c379">&#x27;ProgressView&#x27;</span><span style="color:#abb2bf">, </span><span style="color:#98c379">&#x27;ScrollView&#x27;</span><span style="color:#abb2bf">, </span><span style="color:#98c379">&#x27;SegmentedControl&#x27;</span><span style="color:#abb2bf">, </span><span style="color:#98c379">&#x27;Slider&#x27;</span><span style="color:#abb2bf">, </span><span style="color:#98c379">&#x27;Spinner&#x27;</span><span style="color:#abb2bf">, </span><span style="color:#98c379">&#x27;Stepper&#x27;</span><span style="color:#abb2bf">, </span><span style="color:#98c379">&#x27;Switch&#x27;</span><span style="color:#abb2bf">, </span><span style="color:#98c379">&#x27;TabBar&#x27;</span><span style="color:#abb2bf">, </span><span style="color:#98c379">&#x27;TableView&#x27;</span><span style="color:#da70d6">}</span><span style="color:#abb2bf">,</span></div>
<div class="num" style="top:117.20px">13</div>
<div class="ln" style="top:126.11px">        <span style="color:#e06c75">graphics</span> <span style="color:#c678dd">=</span> <span style="color:#da70d6">{</span><span style="color:#98c379">&#x27;ImageSheet&#x27;</span><span style="color:#abb2bf">, </span><span style="color:#98c379">&#x27;Mask&#x27;</span><span style="color:#abb2bf">, </span><span style="color:#98c379">&#x27;Outline&#x27;</span><span style="color:#abb2bf">, </span><span style="color:#98c379">&#x27;Texture&#x27;</span> <span style="color:#da70d6">}</span><span style="color:#abb2bf">,</span></div>
<div class="num" style="top:126.11px">14</div>
<div class="ln" style="top:135.02px">        <span style="color:#e06c75">media</span> <span style="color:#c678dd">=</span> <span style="color:#da70d6">{</span><span style="color:#98c379">&#x27;EventSound&#x27;</span><span style="color:#abb2bf">, </span><span style="color:#98c379">&#x27;Recording&#x27;</span> <span style="color:#da70d6">}</span></div>
<div class="num" style="top:135.02px">15</div>
<div class="ln" style="top:143.92px">    <span style="color:#ffd700">}</span></div>
<div class="num" style="top:143.92px">16</div>
<div class="ln" style="top:152.83px"></div>
<div class="num" style="top:152.83px">17</div>
<div class="ln" style="top:161.73px">    <span style="color:#d19a66">_G</span><span style="color:#abb2bf">.fOrig</span> <span style="color:#c678dd">=</span> <span style="color:#ffd700">{}</span></div>
<div class="num" style="top:161.73px">18</div>
<div class="ln" style="top:170.64px"></div>
<div class="num" style="top:170.64px">19</div>
<div class="ln" style="top:179.55px">    <span style="color:#c678dd">for</span> <span style="color:#e06c75">key</span><span style="color:#abb2bf">, </span><span style="color:#e06c75">value</span> <span style="color:#c678dd">in</span> <span style="color:#56b6c2">pairs</span><span style="color:#ffd700">(</span><span style="color:#e06c75">plugs</span><span style="color:#ffd700">)</span> <span style="color:#c678dd">do</span></div>
<div class="num" style="top:179.55px">20</div>
<div class="ln" style="top:188.45px">        <span style="color:#c678dd">local</span> <span style="color:#e06c75">lib</span> <span style="color:#c678dd">=</span> <span style="color:#d19a66">_G</span><span style="color:#ffd700">[</span><span style="color:#e06c75">key</span><span style="color:#ffd700">]</span></div>
<div class="num" style="top:188.45px">21</div>
<div class="ln" style="top:197.36px">        <span style="color:#c678dd">if</span> <span style="color:#e06c75">lib</span> <span style="color:#c678dd">then</span></div>
<div class="num" style="top:197.36px">22</div>
<div class="ln" style="top:206.27px">            <span style="color:#e06c75">fOrig</span><span style="color:#ffd700">[</span><span style="color:#e06c75">key</span><span style="color:#ffd700">]</span> <span style="color:#c678dd">=</span> <span style="color:#ffd700">{}</span></div>
<div class="num" style="top:206.27px">23</div>
<div class="ln" style="top:215.17px"></div>
<div class="num" style="top:215.17px">24</div>
<div class="ln" style="top:224.08px">            <span style="color:#c678dd">for</span> <span style="color:#e06c75">i</span><span style="color:#c678dd">=</span><span style="color:#d19a66">1</span><span style="color:#abb2bf">, </span><span style="color:#c678dd">#</span><span style="color:#e06c75">value</span> <span style="color:#c678dd">do</span></div>
<div class="num" style="top:224.08px">25</div>
<div class="ln" style="top:232.98px">                <span style="color:#c678dd">local</span> <span style="color:#e06c75">funcName</span> <span style="color:#c678dd">=</span> <span style="color:#98c379">&#x27;new&#x27;</span> <span style="color:#c678dd">..</span> <span style="color:#e06c75">value</span><span style="color:#ffd700">[</span><span style="color:#e06c75">i</span><span style="color:#ffd700">]</span></div>
<div class="num" style="top:232.98px">26</div>
<div class="ln" style="top:241.89px">                <span style="color:#c678dd">local</span> <span style="color:#e06c75">originalFunc</span> <span style="color:#c678dd">=</span> <span style="color:#e06c75">lib</span><span style="color:#ffd700">[</span><span style="color:#e06c75">funcName</span><span style="color:#ffd700">]</span></div>
<div class="num" style="top:241.89px">27</div>
<div class="ln" style="top:250.80px"></div>
<div class="num" style="top:250.80px">28</div>
<div class="ln" style="top:259.70px">                <span style="color:#c678dd">if</span> <span style="color:#e06c75">originalFunc</span> <span style="color:#c678dd">then</span></div>
<div class="num" style="top:259.70px">29</div>
<div class="ln" style="top:268.61px">                    <span style="color:#e06c75">fOrig</span><span style="color:#ffd700">[</span><span style="color:#e06c75">key</span><span style="color:#ffd700">][</span><span style="color:#e06c75">i</span><span style="color:#ffd700">]</span> <span style="color:#c678dd">=</span> <span style="color:#e06c75">originalFunc</span></div>
<div class="num" style="top:268.61px">30</div>
<div class="ln" style="top:277.52px"></div>
<div class="num" style="top:277.52px">31</div>
<div class="ln" style="top:286.42px">                    <span style="color:#e06c75">lib</span><span style="color:#ffd700">[</span><span style="color:#e06c75">funcName</span><span style="color:#ffd700">]</span> <span style="color:#c678dd">=</span> <span style="color:#c678dd">function</span><span style="color:#ffd700">(</span><span style="color:#abb2bf">...</span><span style="color:#ffd700">)</span></div>
<div class="num" style="top:286.42px">32</div>
<div class="ln" style="top:295.33px">                        <span style="color:#c678dd">local</span> <span style="color:#e06c75">f</span> <span style="color:#c678dd">=</span> <span style="color:#e06c75">fOrig</span><span style="color:#ffd700">[</span><span style="color:#e06c75">key</span><span style="color:#ffd700">][</span><span style="color:#e06c75">i</span><span style="color:#ffd700">](</span><span style="color:#abb2bf">...</span><span style="color:#ffd700">)</span></div>
<div class="num" style="top:295.33px">33</div>
<div class="ln" style="top:304.23px">                        <span style="color:#e06c75">f</span><span style="color:#abb2bf">.__lib</span> <span style="color:#c678dd">=</span> <span style="color:#e06c75">key</span></div>
<div class="num" style="top:304.23px">34</div>
<div class="ln" style="top:313.14px">                        <span style="color:#e06c75">f</span><span style="color:#abb2bf">.__type</span> <span style="color:#c678dd">=</span> <span style="color:#e06c75">value</span><span style="color:#ffd700">[</span><span style="color:#e06c75">i</span><span style="color:#ffd700">]</span></div>
<div class="num" style="top:313.14px">35</div>
<div class="ln" style="top:322.05px">                        <span style="color:#c678dd">return</span> <span style="color:#e06c75">f</span></div>
<div class="num" style="top:322.05px">36</div>
<div class="ln" style="top:330.95px">                    <span style="color:#c678dd">end</span></div>
<div class="num" style="top:330.95px">37</div>
<div class="ln" style="top:339.86px">                <span style="color:#c678dd">end</span></div>
<div class="num" style="top:339.86px">38</div>
<div class="ln" style="top:348.77px">            <span style="color:#c678dd">end</span></div>
<div class="num" style="top:348.77px">39</div>
<div class="ln" style="top:357.67px">        <span style="color:#c678dd">end</span></div>
<div class="num" style="top:357.67px">40</div>
<div class="ln" style="top:366.58px">    <span style="color:#c678dd">end</span></div>
<div class="num" style="top:366.58px">41</div>
<div class="ln" style="top:375.48px"></div>
<div class="num" style="top:375.48px">42</div>
<div class="ln" style="top:384.39px">    <span style="color:#e06c75">plugs</span> <span style="color:#c678dd">=</span> <span style="color:#d19a66">nil</span></div>
<div class="num" style="top:384.39px">43</div>
<div class="ln" style="top:393.30px"><span style="color:#c678dd">end</span></div>
<div class="num" style="top:393.30px">44</div>
<div class="ln" style="top:402.20px"></div>
<div class="num" style="top:402.20px">45</div>
<div class="ln" style="top:411.11px"><span style="color:#56b6c2">setmetatable</span><span style="color:#ffd700">(</span><span style="color:#e06c75">Plugin</span><span style="color:#abb2bf">, </span><span style="color:#da70d6">{</span></div>
<div class="num" style="top:411.11px">46</div>
<div class="ln" style="top:420.02px">    <span style="color:#61afef">__call</span> <span style="color:#c678dd">=</span> <span style="color:#c678dd">function</span><span style="color:#179fff">(</span><span style="color:#abb2bf">self</span><span style="color:#179fff">)</span> <span style="color:#c678dd">return</span> <span style="color:#61afef">new</span><span style="color:#179fff">()</span> <span style="color:#c678dd">end</span><span style="color:#abb2bf">,</span></div>
<div class="num" style="top:420.02px">47</div>
<div class="ln" style="top:428.92px">    <span style="color:#e06c75">__metatable</span> <span style="color:#c678dd">=</span> <span style="color:#98c379">&#x27;GhostNost&#x27;</span><span style="color:#abb2bf">,</span></div>
<div class="num" style="top:428.92px">48</div>
<div class="ln" style="top:437.83px">    <span style="color:#e06c75">__index</span> <span style="color:#c678dd">=</span> <span style="color:#e06c75">self</span><span style="color:#abb2bf">,</span></div>
<div class="num" style="top:437.83px">49</div>
<div class="ln" style="top:446.73px">    <span style="color:#61afef">__newindex</span> <span style="color:#c678dd">=</span> <span style="color:#c678dd">function</span><span style="color:#179fff">()</span> <span style="color:#56b6c2">error</span><span style="color:#179fff">(</span><span style="color:#98c379">&#x27;Modification prohibited&#x27;</span><span style="color:#179fff">)</span> <span style="color:#c678dd">end</span></div>
<div class="num" style="top:446.73px">50</div>
<div class="ln" style="top:455.64px"><span style="color:#da70d6">}</span><span style="color:#ffd700">)</span></div>
<div class="num" style="top:455.64px">51</div>
<div class="ln" style="top:464.55px"></div>
<div class="num" style="top:464.55px">52</div>
<div class="ln" style="top:473.45px"><span style="color:#c678dd">return</span> <span style="color:#e06c75">Plugin</span></div>
<div class="num" style="top:473.45px">53</div>
 </div>
 <div class="abs" style="left:779.6px;top:0;width:7px;height:454.2px;border-left:0.8px solid #262a31"></div>
 <div class="abs" style="left:780.4px;top:30.6px;width:6.4px;height:1.1px;background:#4a74c9"></div>
 <div class="abs" style="left:0;top:0;width:786.4px;height:2px;background:linear-gradient(#1b1d22,rgba(0,0,0,0))"></div>
</div>
<svg class="abs" style="left:4px;top:479.5px" width="8" height="8" viewBox="0 0 16 16"><path d="M2 16V7a2 2 0 0 1 2-2h1M5 3a2 2 0 0 1 2-2h5a2 2 0 0 1 2 2v7a2 2 0 0 1-2 2H7a2 2 0 0 1-2-2z" fill="none" stroke="#9ac5c8" stroke-width="1.4"/></svg>
<svg class="abs" style="left:17px;top:480.5px" width="7" height="7" viewBox="0 0 14 14"><path d="M1 14V4a3 3 0 0 1 6 0v10M1 9h6M7 14V2h4a2.5 2.5 0 0 1 0 5H7l5 7" fill="none" stroke="#8b919c" stroke-width="1.2"/></svg>
<div id="sim" class="abs" style="left:449px;top:167px;width:300.3px;height:150.75px;background:#000;box-shadow:0 0 6px rgba(0,0,0,0.45)">
  <div class="abs" style="left:0;top:-0.6px;width:300.3px;height:0.6px;background:#1d2026"></div><div class="abs" style="left:0;top:0;width:300.3px;height:24.3px;background:#fff"></div>
  <svg class="abs" style="left:5px;top:4.4px" width="6.6" height="6.6" viewBox="0 0 14 14"><circle cx="7" cy="7" r="6.5" fill="#f7843f"/><circle cx="7" cy="7" r="4" fill="none" stroke="#ffe2cc" stroke-width="1.2" stroke-dasharray="1.3 0.9"/><circle cx="7" cy="7" r="1.9" fill="#f04a10"/></svg>
  <div class="abs" style="left:14.3px;top:4.9px;font-size:5.85px;letter-spacing:-0.22px;line-height:7px;color:#000;white-space:nowrap;-webkit-text-stroke:0.1px currentColor">ScreenMaker - Solar2D Simulator</div>
  <div class="abs" style="left:244px;top:7.3px;width:5.2px;height:0.4px;background:#555"></div>
  <div class="abs" style="left:265px;top:5.4px;width:4.9px;height:4.3px;border:0.5px solid #c5c5c5"></div>
  <svg class="abs" style="left:286.4px;top:4.9px" width="5.6" height="5.2" viewBox="0 0 10 10"><path d="M0.5 0.5l9 9M9.5 0.5l-9 9" stroke="#111" stroke-width="1.05"/></svg>
  <div class="abs" style="left:2px;top:16.1px;font-size:6px;letter-spacing:-0.1px;line-height:7px;color:#000;-webkit-text-stroke:0.09px currentColor">File</div>
  <div class="abs" style="left:17px;top:16.1px;font-size:6px;letter-spacing:-0.1px;line-height:7px;color:#000;-webkit-text-stroke:0.09px currentColor">Hardware</div>
  <div class="abs" style="left:47.7px;top:16.1px;font-size:6px;letter-spacing:-0.1px;line-height:7px;color:#000;-webkit-text-stroke:0.09px currentColor">View</div>
  <div class="abs" style="left:66px;top:16.1px;font-size:6px;letter-spacing:-0.1px;line-height:7px;color:#000;-webkit-text-stroke:0.09px currentColor">Help</div>
  <div class="abs" style="left:5px;top:25.8px;width:8px;height:2.2px;background:#1c1c1c;border-radius:1px"></div>
  <div class="abs" style="left:278.8px;top:29px;width:12px;height:62px;background:#1c1c1c;border-radius:1px"></div>
  <div class="abs" style="left:100.2px;top:54.6px;width:2px;height:2px;background:#fff;border-radius:50%"></div>
</div>
</body></html>
